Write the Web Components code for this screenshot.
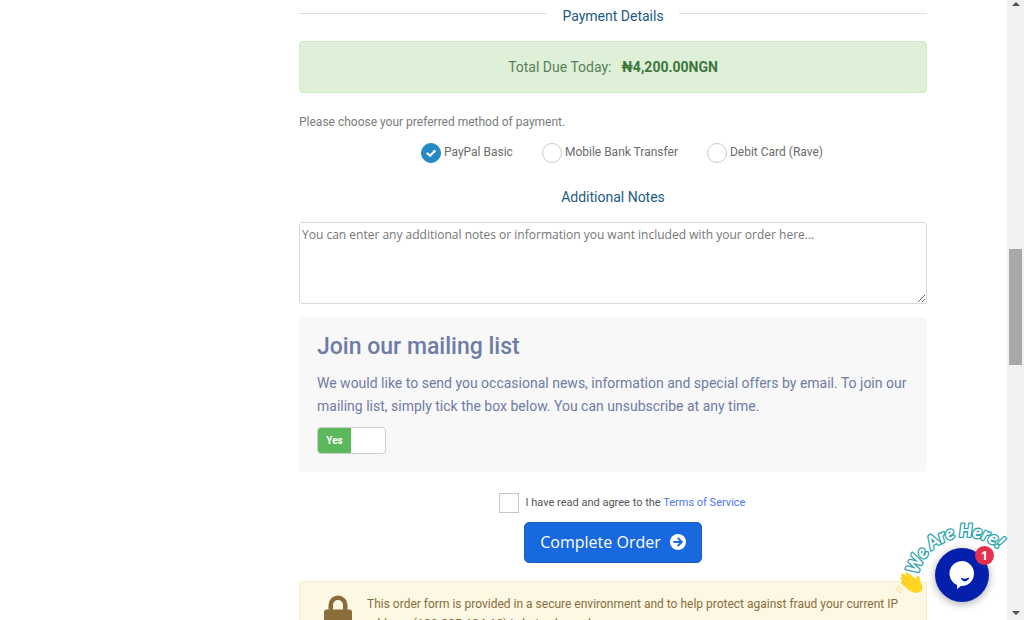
<!DOCTYPE html>
<html lang="en">
<head>
<meta charset="utf-8">
<title>Checkout</title>
<style>
  html, body { margin: 0; height: 100%; overflow: hidden; background: #fff; }
  body { font-family: Roboto, "Liberation Sans", sans-serif; font-size: 12px; color: #666; }
</style>
</head>
<body>
<checkout-page>
  <section-title ruled>Payment Details</section-title>
  <total-due amount="₦4,200.00NGN">Total Due Today:</total-due>
  <payment-methods></payment-methods>
  <section-title>Additional Notes</section-title>
  <order-notes></order-notes>
  <mailing-list></mailing-list>
  <order-submit></order-submit>
  <secure-notice></secure-notice>
</checkout-page>

<script>
const define = (name, html, setup) => customElements.define(name, class extends HTMLElement {
  connectedCallback() {
    if (this.shadowRoot) return;
    const t = document.createElement('template');
    t.innerHTML = html;
    this.attachShadow({ mode: 'open' }).append(t.content.cloneNode(true));
    if (setup) setup(this, this.shadowRoot);
  }
});

define('checkout-page', `
<style>
  :host { display: grid; grid-template-columns: 299px minmax(0, 1fr) 80px 17px; height: 100vh; overflow: hidden; position: relative; }
  main { grid-column: 2; min-width: 0; display: flex; flex-direction: column; }
  page-scrollbar { grid-column: 4; }
  chat-launcher { position: absolute; right: 17px; bottom: 0; }
</style>
<main><slot></slot></main>
<page-scrollbar></page-scrollbar>
<chat-launcher></chat-launcher>`);

define('page-scrollbar', `
<style>
  :host { display: flex; flex-direction: column; align-items: center; background: #f1f1f1; padding: 2px 0 5px; box-sizing: border-box; height: 100vh; }
  svg { display: block; flex: none; }
  .before { flex: 243; } .after { flex: 246; }
  .thumb { flex: 116; width: 13px; background: #a8a8a8; }
</style>
<svg width="8" height="4" viewBox="0 0 8 4"><path d="M4 0 8 4H0z" fill="#505050"/></svg>
<div class="before"></div><div class="thumb"></div><div class="after"></div>
<svg width="8" height="4" viewBox="0 0 8 4"><path d="M0 0h8L4 4z" fill="#505050"/></svg>`);

define('section-title', `
<style>
  :host { display: flex; justify-content: center; gap: 15px; color: #1d5a84; margin-bottom: 14px; }
  :host([ruled]) { padding-top: 6px; margin-bottom: 15px; }
  h2 { margin: 0; font-size: 14px; line-height: 20px; font-weight: 400; }
  i { display: none; flex: 1; height: 1px; margin-top: 7px; background: #ddd; }
  :host([ruled]) i { display: block; }
</style>
<i></i><h2><slot></slot></h2><i></i>`);

define('total-due', `
<style>
  :host { display: flex; justify-content: center; gap: 10px; padding: 15px; font-size: 14px; line-height: 20px;
    color: #3c763d; background: #dff0d8; border: 1px solid #d0e9c6; border-radius: 4px; margin-bottom: 19px; }
  span { color: #56805a; }
</style>
<span><slot></slot></span><strong></strong>`,
(host, root) => { root.querySelector('strong').textContent = host.getAttribute('amount'); });

define('payment-methods', `
<style>
  :host { display: block; margin-bottom: 24px; }
  fieldset { border: 0; margin: 0; padding: 0; min-width: 0; }
  legend { padding: 0; line-height: 20px; color: #7c7c7c; margin-bottom: 11px; }
  .row { display: flex; justify-content: center; gap: 29px; padding-left: 18px; }
</style>
<fieldset>
  <legend>Please choose your preferred method of payment.</legend>
  <div class="row">
    <label-radio value="paypal" checked>PayPal Basic</label-radio>
    <label-radio value="bank">Mobile Bank Transfer</label-radio>
    <label-radio value="rave">Debit Card (Rave)</label-radio>
  </div>
</fieldset>`);

define('label-radio', `
<style>
  :host { display: block; color: #6c6c6c; }
  label { display: flex; gap: 3px; line-height: 18px; }
  .box { display: grid; width: 20px; height: 20px; }
  .box > * { grid-area: 1 / 1; }
  input { appearance: none; margin: 0; width: 20px; height: 20px; border: 1px solid #ccc; border-radius: 50%; background: #fff; box-sizing: border-box; }
  input:checked { background: #2489c5; border-color: #2489c5; }
  svg { visibility: hidden; pointer-events: none; }
  input:checked + svg { visibility: visible; }
</style>
<label><span class="box"><input type="radio" name="method"><svg width="20" height="20" viewBox="0 0 20 20"><path d="M5.8 9.8 9 12.8 14.4 7.4" fill="none" stroke="#fff" stroke-width="2.2"/></svg></span><span><slot></slot></span></label>`,
(host, root) => {
  const input = root.querySelector('input');
  input.checked = host.hasAttribute('checked');
  input.value = host.getAttribute('value');
  input.setAttribute('aria-label', host.textContent);
  input.addEventListener('change', () => {
    for (const other of host.parentNode.querySelectorAll('label-radio'))
      if (other !== host) other.shadowRoot.querySelector('input').checked = false;
  });
});

define('order-notes', `
<style>
  :host { display: block; margin: 1px 0 13px; }
  textarea { display: block; width: 100%; height: 82px; box-sizing: border-box; margin: 0; padding: 2px; border: 1px solid #d9d9d9; border-radius: 3px;
    font: 12px/20px "Open Sans", sans-serif; color: #555; }
  textarea::placeholder { color: #757575; }
</style>
<textarea aria-label="Additional Notes" placeholder="You can enter any additional notes or information you want included with your order here..."></textarea>`);

define('mailing-list', `
<style>
  :host { display: block; background: #f8f8f8; border-radius: 4px; padding: 16px 18px 18px; color: #6f7ba6; margin-bottom: 20px; }
  h3 { margin: 0 0 11px; font-size: 23px; line-height: 28px; font-weight: 500; }
  p { margin: 0 0 9px; font-size: 14px; line-height: 23px; }
  label { display: inline-grid; width: 69px; height: 27px; box-sizing: border-box; border: 1px solid #ccc; border-radius: 4px; background: #fff; overflow: hidden; grid-template-columns: 33px 1fr; vertical-align: top; }
  input { appearance: none; margin: 0; grid-area: 1 / 1 / 2 / 3; }
  span { grid-area: 1 / 1; background: #5cb85c; color: #fff; font: bold 10px/25px Roboto, sans-serif; text-align: center; pointer-events: none; visibility: hidden; }
  input:checked + span { visibility: visible; }
</style>
<h3>Join our mailing list</h3>
<p>We would like to send you occasional news, information and special offers by email. To join our mailing list, simply tick the box below. You can unsubscribe at any time.</p>
<label><input type="checkbox" aria-label="Join our mailing list" checked><span>Yes</span></label>`);

define('order-submit', `
<style>
  :host { display: flex; flex-direction: column; align-items: center; gap: 9px; margin-bottom: 18px; }
  .agree { display: flex; gap: 7px; font-size: 11px; line-height: 21px; color: #555; padding-left: 18px; }
  input { appearance: none; margin: 1px 0 0; width: 20px; height: 20px; border: 1px solid #c9c6bd; background: #fff; box-sizing: border-box; }
  a { color: #5074f5; text-decoration: none; }
  button { display: flex; align-items: center; gap: 9px; height: 41px; padding: 0 15px 2px; border: 1px solid #1a5fb4; border-radius: 5px; background: #1869df; color: #fff;
    font: 16px/24px "Open Sans", sans-serif; }
</style>
<div class="agree"><input type="checkbox" id="tos"><span><label for="tos">I have read and agree to the</label> <a href="#terms">Terms of Service</a></span></div>
<button type="submit">Complete Order
  <svg width="16" height="16" viewBox="0 0 16 16"><circle cx="8" cy="8" r="8" fill="#fff"/><path d="M3.4 8h8M7.7 3.9 11.8 8l-4.1 4.1" fill="none" stroke="#1869df" stroke-width="2"/></svg>
</button>`);

define('secure-notice', `
<style>
  :host { display: flex; gap: 15px; padding: 12px 24px; background: #fcf8e3; border: 1px solid #faebcc; border-radius: 4px; color: #8a6d3b; }
  svg { flex: none; margin-top: 1px; }
  p { margin: 0; font-size: 12px; line-height: 20px; }
</style>
<svg width="28" height="36" viewBox="0 0 28 36"><path d="M2.5 14.500H4.500V10a9.500 9.500 0 0 1 19 0v4.500h2A2.500 2.500 0 0 1 28 17v15.500a2.500 2.500 0 0 1-2.500 2.500h-23A2.500 2.500 0 0 1 0 32.500V17a2.500 2.500 0 0 1 2.500-2.500zM9 14.500h10V10a5 5 0 0 0-10 0z" fill="#8a6d3b" fill-rule="evenodd"/></svg>
<p>This order form is provided in a secure environment and to help protect against fraud your current IP address (<strong>129.205.124.12</strong>) is being logged.</p>`);

define('chat-launcher', `
<style>
  :host { display: block; width: 117px; height: 110px; }
  svg { display: block; overflow: visible; pointer-events: none; }
  button { position: absolute; right: 18px; bottom: 18px; width: 54px; height: 54px; border: 0; border-radius: 50%; padding: 0; background: #041fab; box-shadow: 0 2px 8px #0005; display: grid; place-items: center; }
  b { position: absolute; right: 13px; bottom: 55px; width: 19px; height: 19px; border-radius: 50%; background: #e62f4c; color: #fff; font: bold 12px/19px "Open Sans", sans-serif; text-align: center; }
  text { font: italic 900 18px Lato, sans-serif; fill: #fff; stroke: #2aa3ad; stroke-width: 2.6px; paint-order: stroke; stroke-linejoin: round; }
</style>
<svg width="117" height="110" viewBox="890 510 117 110">
  <path id="arc" d="M918 575A49 49 0 0 1 1008 561" fill="none"/>
  <text><textPath href="#arc">We Are Here!</textPath></text>
  <g fill="#ffd422"><path d="M901.500 576c-1.500-1.500.3-3.300 2-2.100l3.500 2.300-1.500-2.300c-.5-1.500 1-2.300 2.300-1.100l8.200 6.200c.4-1.500 1.200-3.300 2.700-2.900 1.500.6.8 2.300 1.100 3.900l2.500 6.500c1 3.500-2 6.400-6 6.300-3.500 0-6.300-1.800-8.600-3.700l-6.200-5c-1.300-1.500.2-2.900 1.700-2.200l-2.400-2.300c-1.200-1.800.3-3.200 2-2.200z"/></g>
  <g fill="none" stroke="#f3b322" stroke-width=".8"><path d="M903 577l5 4M901.500 581l5 3.500"/><path d="M898 585.500q1.500 3.500 5 4.500M895.500 587q2 4.500 5.500 5.800" stroke="#f6cc4b"/></g>
</svg>
<button type="button" aria-label="Open chat"><svg width="28" height="30" viewBox="0 0 28 30"><path d="M14 1a12.500 12.500 0 1 1-1 25l-4 3V25A12.500 12.500 0 0 1 14 1z" fill="#fff"/><path d="M13 18.500q4 1.800 8-.3-3.800 5.300-8 .3z" fill="#041fab" stroke="#041fab"/></svg></button>
<b>1</b>`);
</script>
</body>
</html>
